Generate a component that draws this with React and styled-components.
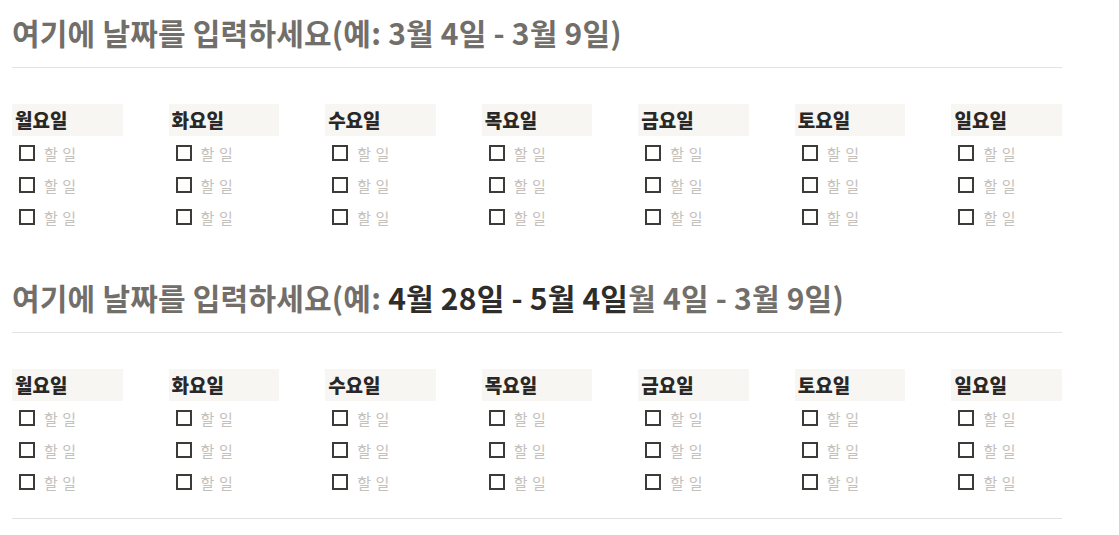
import React from "react";
import styled, { createGlobalStyle } from "styled-components";

const GlobalStyle = createGlobalStyle`
  body {
    margin: 0;
    background: #ffffff;
    font-family: "Noto Sans CJK KR", "Noto Sans", sans-serif;
    color: #37352f;
  }
`;

const days = ["월요일", "화요일", "수요일", "목요일", "금요일", "토요일", "일요일"];

const weeks = [
  { bold: null, rest: "3월 4일 - 3월 9일)" },
  { bold: "4월 28일 - 5월 4일", rest: "월 4일 - 3월 9일)" }
];

const App = () => (
  <Page>
    <GlobalStyle />
    {weeks.map((w, i) => (
      <Section key={i}>
        <Heading>
          여기에 날짜를 입력하세요(예: {w.bold && <Strong>{w.bold}</Strong>}
          {w.rest}
        </Heading>
        <Week>
          {days.map(d => (
            <Day key={d}>
              <DayTitle>{d}</DayTitle>
              {[0, 1, 2].map(n => (
                <Todo key={n}>
                  <Box />
                  <Placeholder>할 일</Placeholder>
                </Todo>
              ))}
            </Day>
          ))}
        </Week>
      </Section>
    ))}
    <Divider />
  </Page>
);

export default App;

const Page = styled.div`
  width: 1050px;
  margin-left: 12px;
`;

const Section = styled.section`
  padding-bottom: 32px;
`;

const Heading = styled.h2`
  margin: 0;
  padding: 13px 0 16px;
  font-size: 30px;
  line-height: 38px;
  font-weight: 700;
  letter-spacing: 0.2px;
  color: #726e6a;
  border-bottom: 1px solid #e3e2e0;
`;

const Strong = styled.span`
  color: #2f2d2a;
`;

const Week = styled.div`
  display: grid;
  grid-template-columns: repeat(7, 1fr);
  column-gap: 46px;
  margin-top: 36px;
`;

const Day = styled.div`
  display: flex;
  flex-direction: column;
`;

const DayTitle = styled.div`
  height: 32px;
  padding-left: 3px;
  background: #f7f6f3;
  font-size: 19px;
  line-height: 31px;
  font-weight: 900;
  color: #2a2826;
  margin-bottom: 1px;
`;

const Todo = styled.div`
  display: flex;
  align-items: center;
  height: 32px;
  padding-left: 7px;
`;

const Box = styled.span`
  width: 16px;
  height: 16px;
  box-sizing: border-box;
  border: 2px solid #3d3b38;
  flex-shrink: 0;
`;

const Placeholder = styled.span`
  margin-left: 9px;
  font-size: 15px;
  color: #c4c1bd;
  letter-spacing: 0.6px;
`;

const Divider = styled.div`
  margin-top: -12px;
  height: 1px;
  background: #e3e2e0;
`;
